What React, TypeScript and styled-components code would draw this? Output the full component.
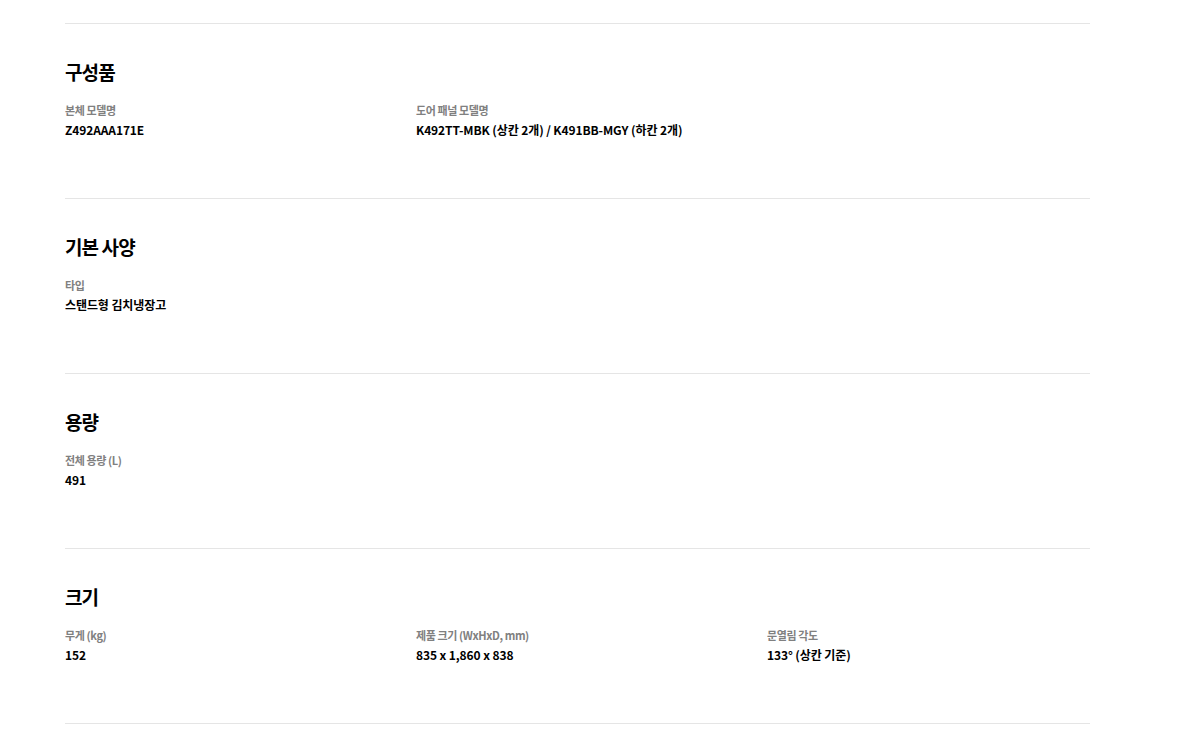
import React from "react";
import styled, { createGlobalStyle } from "styled-components";

const Global = createGlobalStyle`
  html, body { margin: 0; padding: 0; background: #fff; }
  body { font-family: "Noto Sans CJK KR", "Noto Sans", sans-serif; color: #000; }
`;

const Page = styled.main`
  padding: 23px 110px 0 65px;
`;

const Section = styled.section`
  border-top: 1px solid #e5e5e5;
  padding: 35px 0 58px;
`;

const Title = styled.h2`
  margin: 0 0 17px;
  font-size: 19px;
  line-height: 26px;
  font-weight: 700;
  letter-spacing: -0.9px;
  color: #000;
`;

const Grid = styled.div`
  display: grid;
  grid-template-columns: repeat(3, 1fr);
  column-gap: 28px;
`;

const Item = styled.div`
  display: flex;
  flex-direction: column;
  gap: 2px;
`;

const Label = styled.div`
  font-size: 11px;
  line-height: 16px;
  font-weight: 700;
  letter-spacing: -0.4px;
  color: #808080;
`;

const Value = styled.div`
  font-size: 12px;
  line-height: 20px;
  font-weight: 700;
  letter-spacing: -0.1px;
  color: #000;
`;

type Spec = { label: string; value: string };
const data: { title: string; items: Spec[] }[] = [
  {
    title: "구성품",
    items: [
      { label: "본체 모델명", value: "Z492AAA171E" },
      { label: "도어 패널 모델명", value: "K492TT-MBK (상칸 2개) / K491BB-MGY (하칸 2개)" },
    ],
  },
  { title: "기본 사양", items: [{ label: "타입", value: "스탠드형 김치냉장고" }] },
  { title: "용량", items: [{ label: "전체 용량 (L)", value: "491" }] },
  {
    title: "크기",
    items: [
      { label: "무게 (kg)", value: "152" },
      { label: "제품 크기 (WxHxD, mm)", value: "835 x 1,860 x 838" },
      { label: "문열림 각도", value: "133° (상칸 기준)" },
    ],
  },
];

export default function App() {
  return (
    <>
      <Global />
      <Page>
        {data.map((s) => (
          <Section key={s.title}>
            <Title>{s.title}</Title>
            <Grid>
              {s.items.map((it) => (
                <Item key={it.label}>
                  <Label>{it.label}</Label>
                  <Value>{it.value}</Value>
                </Item>
              ))}
            </Grid>
          </Section>
        ))}
        <Section />
      </Page>
    </>
  );
}
